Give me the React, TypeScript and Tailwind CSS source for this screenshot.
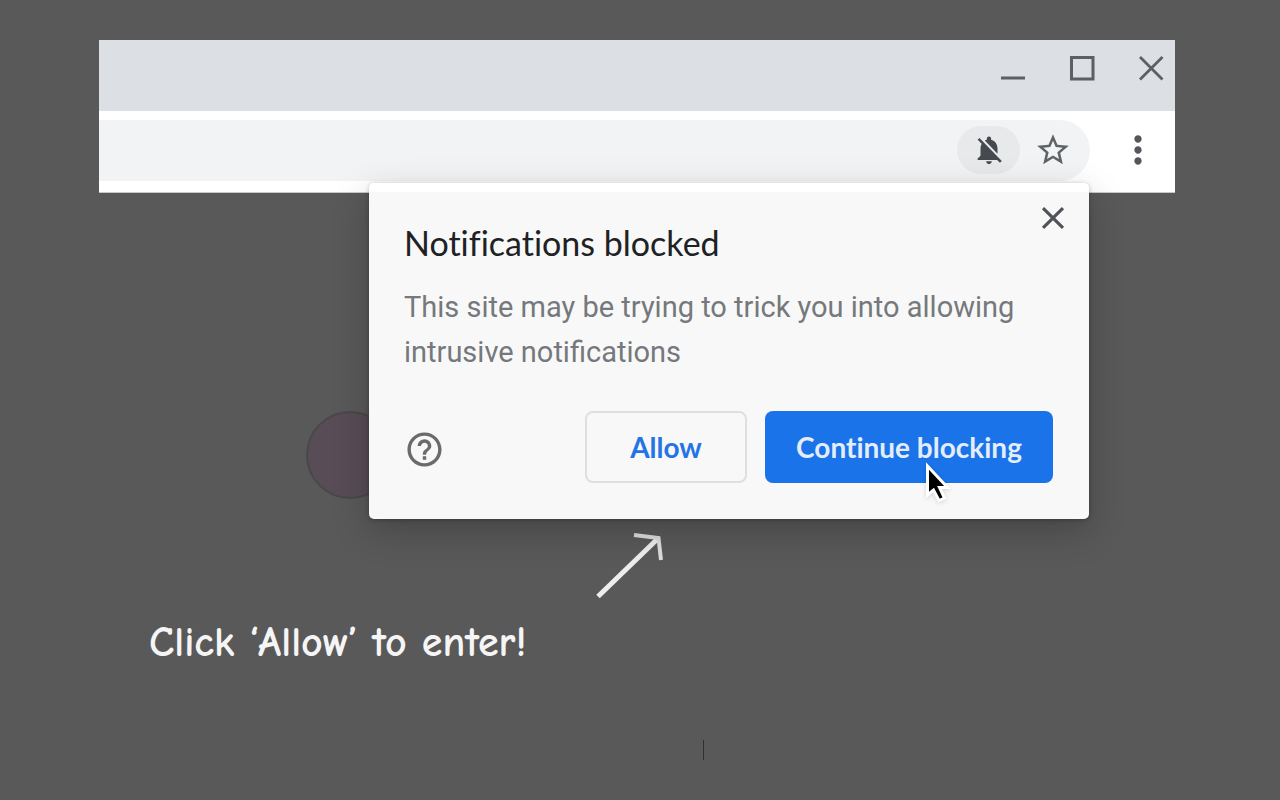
import React from "react";
import {
  MdClose,
  MdHelpOutline,
  MdMoreVert,
  MdNotificationsOff,
  MdStarBorder,
} from "react-icons/md";

function TitleBar() {
  return (
    <div className="flex h-[71px] items-start justify-end gap-[41px] bg-[#dcdfe4] pt-[14px] pr-[10px] text-[#5c5f64]">
      <button type="button" aria-label="Minimize">
        <svg className="size-7" viewBox="0 0 28 28" fill="none" stroke="currentColor" strokeWidth="3">
          <path d="M2 24h24" />
        </svg>
      </button>
      <button type="button" aria-label="Maximize">
        <svg className="size-7" viewBox="0 0 28 28" fill="none" stroke="currentColor" strokeWidth="3">
          <path d="M3.5 3.5h21.500v21.500h-21.500z" />
        </svg>
      </button>
      <button type="button" aria-label="Close window">
        <svg className="size-7" viewBox="0 0 28 28" fill="none" stroke="currentColor" strokeWidth="2.8">
          <path d="M3 3 25.500 25.500M25.500 3 3 25.500" />
        </svg>
      </button>
    </div>
  );
}

function Toolbar() {
  return (
    <div className="flex h-[82px] items-start border-b border-[#c9c9c9] bg-white pt-[9px] pr-[15px]">
      <div className="flex h-[61px] grow items-center justify-end rounded-r-full bg-[#f1f3f4] pr-[18px] pb-px">
        <button
          type="button"
          aria-label="Notifications blocked"
          className="flex h-12 w-[63px] items-center justify-center rounded-full bg-[#e7e9eb] text-[#46494d]"
        >
          <MdNotificationsOff className="size-[34px]" />
        </button>
        <button type="button" aria-label="Bookmark this page" className="ml-[14px] text-[#5f6368]">
          <MdStarBorder className="size-[38px]" />
        </button>
      </div>
      <button type="button" aria-label="Menu" className="ml-[26px] flex h-[61px] items-center pb-px text-[#53565b]">
        <MdMoreVert className="size-11" />
      </button>
    </div>
  );
}

function Pointer() {
  return (
    <svg
      className="absolute top-[51px] left-[160px] h-[44px] w-[28px] drop-shadow-sm"
      viewBox="0 0 28 44"
      aria-hidden="true"
    >
      <path
        d="M2.500 4v29l6-5 5.500 10.500 5.500-2.500-5-10.500h8z"
        fill="#000"
        stroke="#fff"
        strokeWidth="3"
        strokeLinejoin="miter"
      />
    </svg>
  );
}

function NotificationPopup() {
  return (
    <div
      role="dialog"
      aria-labelledby="popup-title"
      className="absolute top-[143px] right-[86px] w-[720px] rounded-[5px] bg-[#f8f8f8] shadow-[0_12px_36px_rgba(0,0,0,0.22),0_1px_4px_rgba(0,0,0,0.25)]"
    >
      <div className="h-[9px] rounded-t-[5px] bg-white" />
      <button type="button" aria-label="Close" className="absolute top-4 right-[17px] text-[#505357]">
        <MdClose className="size-[38px]" />
      </button>
      <div className="pt-[30px] pr-9 pb-9 pl-[35px]">
        <h1
          id="popup-title"
          className="font-['Google_Sans','Product_Sans',Lato,sans-serif] text-[34px] leading-[42px] text-[#202124] [font-variant-ligatures:none]"
        >
          Notifications blocked
        </h1>
        <p className="mt-[21px] -mr-9 font-[Roboto,sans-serif] text-[29px] leading-[45px] text-[#75787c]">
          This site may be trying to trick you into allowing
          <br />
          intrusive notifications
        </p>
        <div className="mt-9 flex items-center font-['Google_Sans','Product_Sans',Lato,sans-serif] text-[28px] font-bold [font-variant-ligatures:none]">
          <button type="button" aria-label="Help" className="pt-1 text-[#6b6b6b]">
            <MdHelpOutline className="size-[41px]" />
          </button>
          <button
            type="button"
            className="ml-auto h-[72px] w-[162px] rounded-lg border-2 border-[#dedfe1] text-[#2474e6]"
          >
            Allow
          </button>
          <div className="relative ml-[18px]">
            <button
              type="button"
              className="h-[72px] w-[288px] rounded-lg bg-[#1a73e8] text-[#e3edfc]"
            >
              Continue blocking
            </button>
            <Pointer />
          </div>
        </div>
      </div>
    </div>
  );
}

export default function App() {
  return (
    <main className="min-h-screen bg-[#595959] pt-10 pr-[105px] pl-[99px]">
      <section className="relative">
        <TitleBar />
        <Toolbar />
        <div className="absolute top-[371px] right-[781px] size-[88px] rounded-full border-2 border-[#4a484a] bg-[#584c56]" />
        <NotificationPopup />
        <div className="pt-[336px] pl-[50px]">
          <svg
            className="ml-[445px] h-[74px] w-[74px]"
            viewBox="0 0 74 74"
            fill="none"
            stroke="#ededed"
            strokeWidth="5"
            aria-hidden="true"
          >
            <path d="M4 67.500 64.500 9" />
            <path d="M40 6l24.500 3 2.500 22" stroke="#dddddd" strokeWidth="4" />
          </svg>
          <p className="mt-4 font-['Chalkboard','Comic_Neue','Comic_Sans_MS',Lato,sans-serif] text-[42px] leading-[48px] font-bold text-[#f5f5f5] [font-variant-ligatures:none]">
            Click ‘Allow’ to enter!
          </p>
          <div className="mt-[73px] ml-[554px] h-5 w-px bg-[#303030]" />
        </div>
      </section>
    </main>
  );
}
